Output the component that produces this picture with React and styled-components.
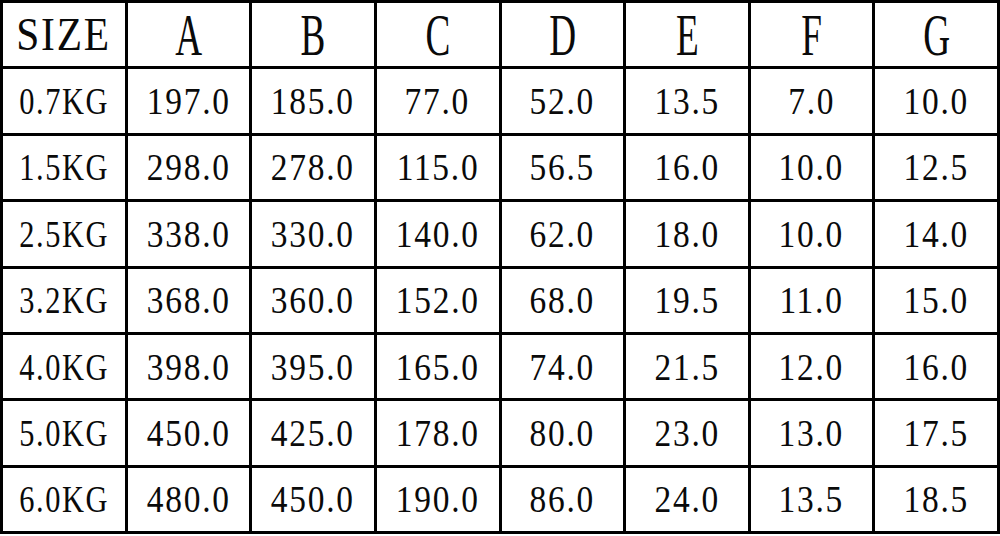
import styled, { createGlobalStyle } from 'styled-components';

const GlobalStyle = createGlobalStyle`
  html, body {
    margin: 0;
    padding: 0;
    background: #ffffff;
  }
  body {
    width: 1000px;
    height: 536px;
    overflow: hidden;
    font-family: 'Liberation Serif', 'Noto Sans CJK SC', serif;
    color: #000;
  }
`;

const SizeGrid = styled.div`
  width: 1000px;
  height: 534px;
  box-sizing: border-box;
  display: grid;
  grid-template-columns: repeat(8, 1fr);
  grid-template-rows: repeat(8, 1fr);
  gap: 3px;
  padding: 3px;
  background: #000;
`;

const Cell = styled.div`
  background: #fff;
  display: flex;
  align-items: center;
  justify-content: center;
  overflow: hidden;
`;

const CellText = styled.span`
  display: inline-block;
  font-family: 'Liberation Serif', serif;
  font-size: ${(p) => p.$size}px;
  letter-spacing: ${(p) => p.$spacing || 0}px;
  line-height: 1;
  white-space: nowrap;
  transform: scaleX(${(p) => p.$scale});
  color: #0a0a0a;
`;

const columns = ['A', 'B', 'C', 'D', 'E', 'F', 'G'];

const rows = [
  ['0.7KG', '197.0', '185.0', '77.0', '52.0', '13.5', '7.0', '10.0'],
  ['1.5KG', '298.0', '278.0', '115.0', '56.5', '16.0', '10.0', '12.5'],
  ['2.5KG', '338.0', '330.0', '140.0', '62.0', '18.0', '10.0', '14.0'],
  ['3.2KG', '368.0', '360.0', '152.0', '68.0', '19.5', '11.0', '15.0'],
  ['4.0KG', '398.0', '395.0', '165.0', '74.0', '21.5', '12.0', '16.0'],
  ['5.0KG', '450.0', '425.0', '178.0', '80.0', '23.0', '13.0', '17.5'],
  ['6.0KG', '480.0', '450.0', '190.0', '86.0', '24.0', '13.5', '18.5'],
];

function App() {
  return (
    <>
      <GlobalStyle />
      <SizeGrid>
        <Cell>
          <CellText $size={46} $scale={0.9} $spacing={2}>SIZE</CellText>
        </Cell>
        {columns.map((col) => (
          <Cell key={col}>
            <CellText $size={60} $scale={0.62}>{col}</CellText>
          </Cell>
        ))}
        {rows.map((row) =>
          row.map((value, i) => (
            <Cell key={row[0] + i}>
              <CellText
                $size={38}
                $scale={i === 0 ? 0.8 : 0.88}
                $spacing={2}
              >
                {value}
              </CellText>
            </Cell>
          ))
        )}
      </SizeGrid>
    </>
  );
}

export default App;
